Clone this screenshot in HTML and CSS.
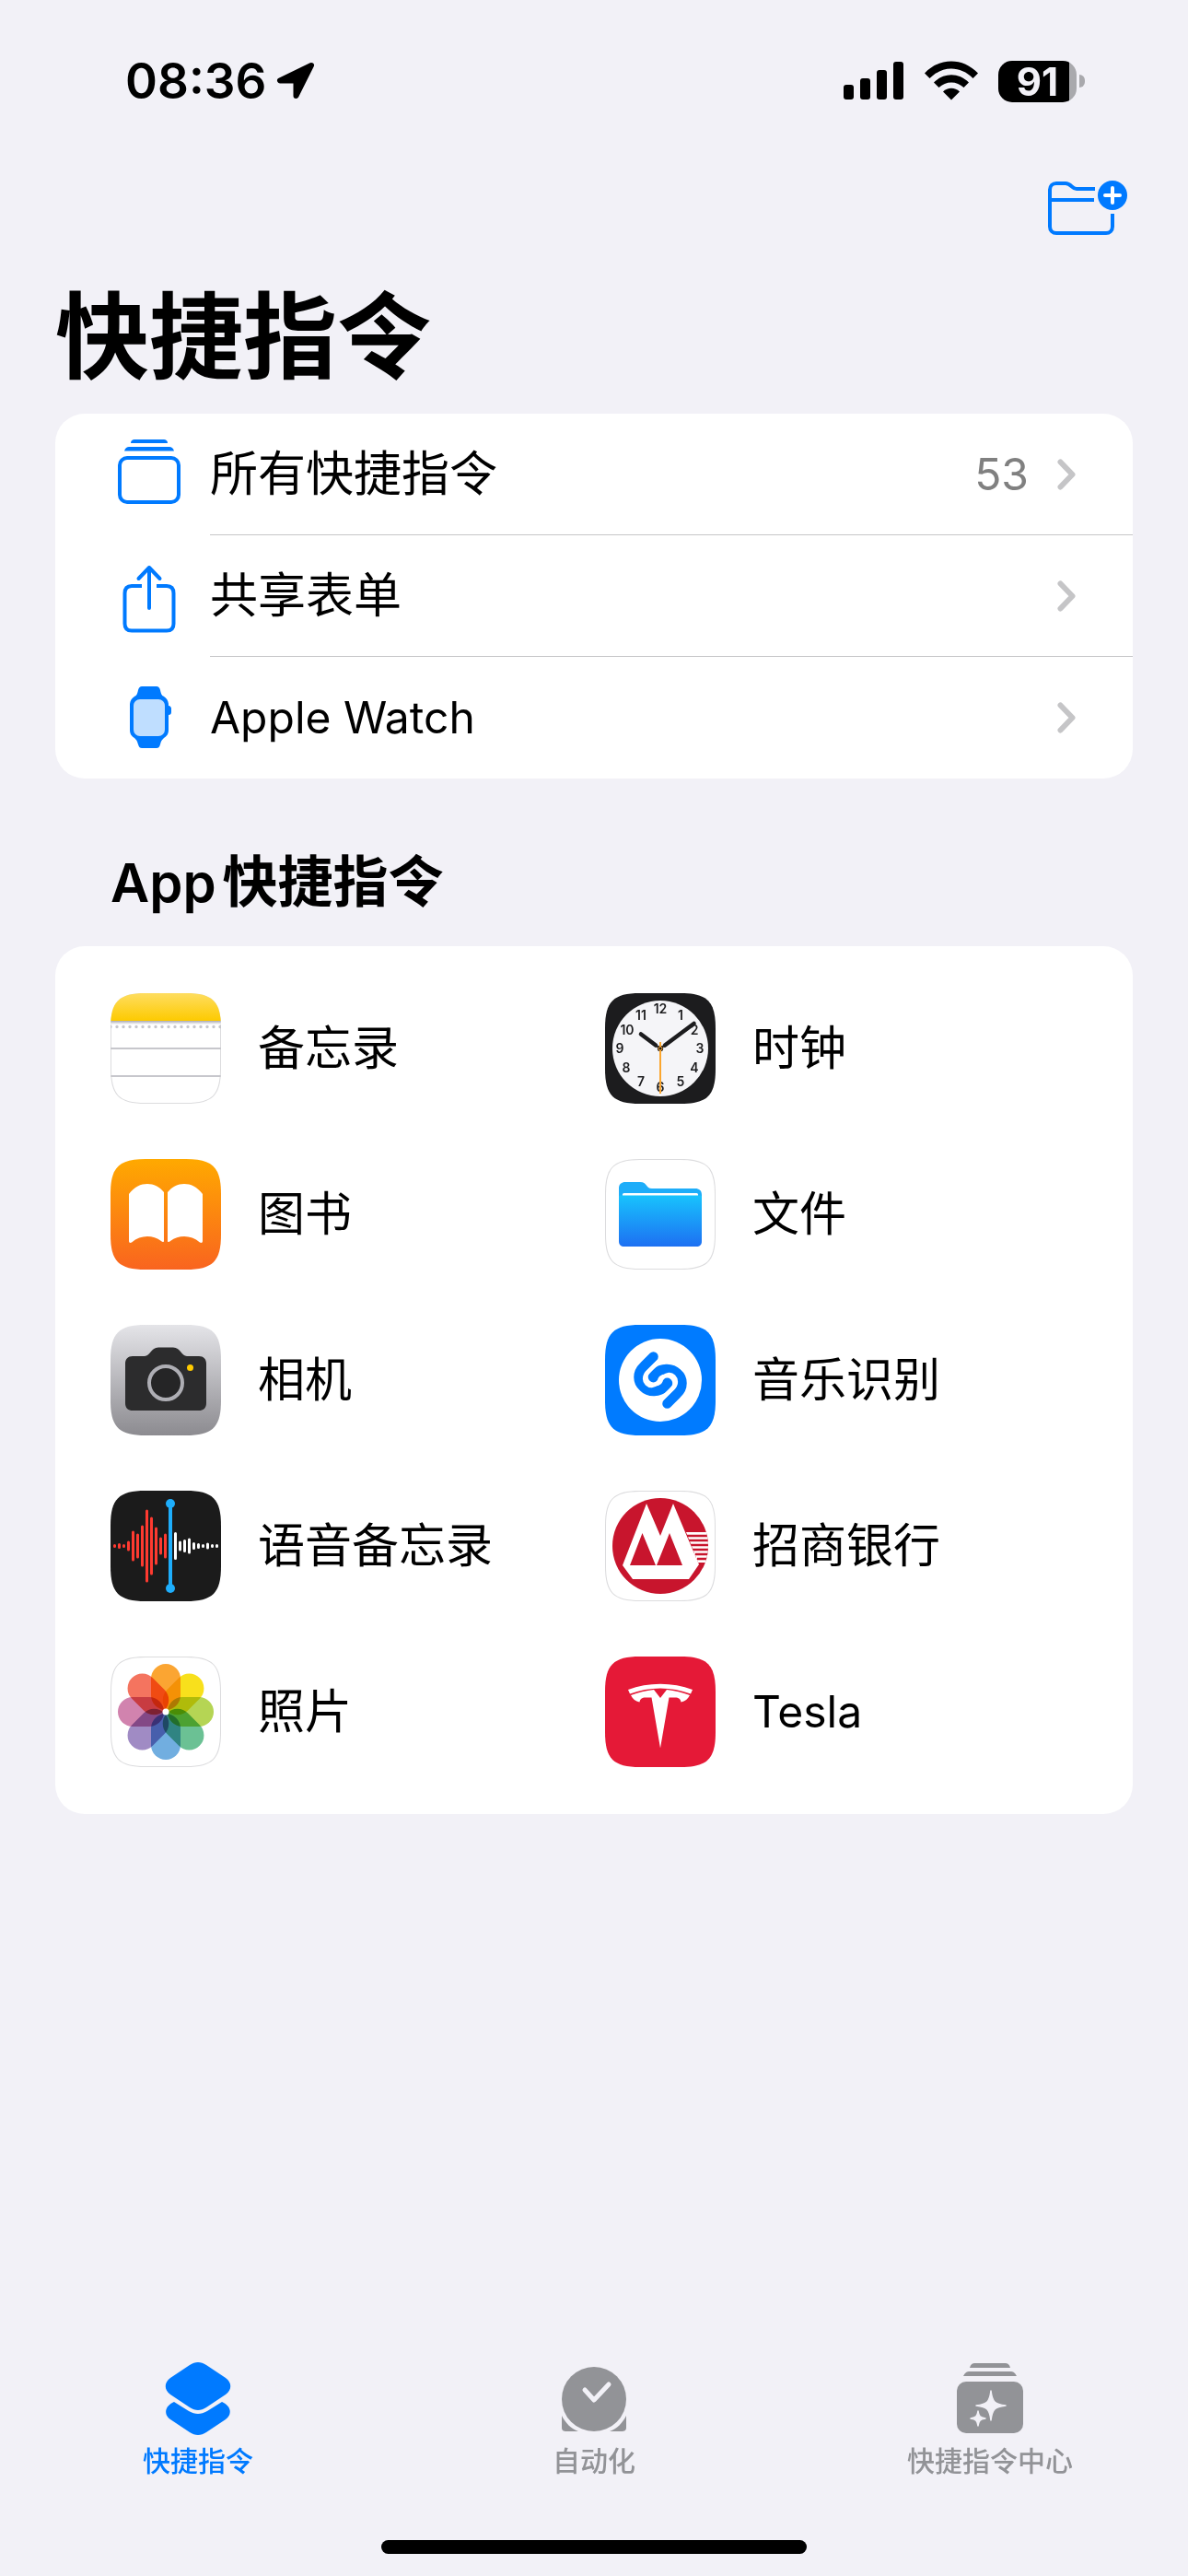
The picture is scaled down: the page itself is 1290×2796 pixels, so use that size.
FILE: index.html
```html
<!DOCTYPE html>
<html lang="zh-CN">
<head>
  <meta charset="UTF-8">
  <meta name="viewport" content="width=device-width, initial-scale=1.0">
  <title>快捷指令</title>
  <link rel="stylesheet" href="styles.css">
</head>
<body>
  <!-- Status bar -->
  <div class="status-bar">
    <div class="status-left">
      <span class="time">08:36</span>
      <svg width="44" height="44" viewBox="0 0 44 44"><path d="M39 5L5 21.500H22.500V38Z" fill="#000" stroke="#000" stroke-width="6" stroke-linejoin="round"/></svg>
    </div>
    <div class="status-right">
      <svg width="66" height="44" viewBox="0 0 66 44">
        <rect x="0" y="26" width="11" height="16" rx="3"/>
        <rect x="18" y="19" width="11" height="23" rx="3"/>
        <rect x="36" y="10" width="11" height="32" rx="3"/>
        <rect x="54" y="1" width="11" height="41" rx="3"/>
      </svg>
      <svg width="58" height="44" viewBox="0 0 58 44">
        <path d="M0 13.500C16-4 42-4 58 13.500L52.500 19C39 5 19 5 5.500 19Z"/>
        <path d="M10 23.500C21 12.500 37 12.500 48 23.500L42.500 29C35 21.500 23 21.500 15.500 29Z"/>
        <path d="M20 33.500C25 28.500 33 28.500 38 33.500L29 42.500Z"/>
      </svg>
      <div class="battery-group">
        <span class="battery">91</span>
        <span class="battery-cap"></span>
      </div>
    </div>
  </div>

  <header class="header">
    <div class="toolbar">
      <button class="icon-button" aria-label="新建文件夹">
        <svg width="90" height="64" viewBox="0 0 90 64" fill="none" stroke="#007aff" stroke-width="4">
          <path d="M53 11H33C28 11 27 5 21 5H11C7 5 4 8 4 12V52C4 56 7 59 11 59H65C69 59 72 56 72 52V38"/>
          <path d="M4 23H52"/>
          <circle cx="72" cy="18" r="16" fill="#007aff" stroke="none"/>
          <path d="M72 10V26M64 18H80" stroke="#fff" stroke-linecap="round"/>
        </svg>
      </button>
    </div>
    <h1>快捷指令</h1>
  </header>

  <main class="content">
    <!-- Shortcut collections -->
    <nav class="card list">
      <a class="row" href="#all">
        <span class="row-icon">
          <svg width="72" height="76" viewBox="0 0 72 76" fill="none" stroke="#007aff" stroke-width="4">
            <path d="M16 4C16 1 18 0 20 0H52C54 0 56 1 56 4ZM9 12.500C10 9 12 8 14 8H58C60 8 62 9 63 12.500Z" fill="#007aff" stroke="none"/>
            <rect x="4" y="20" width="64" height="48" rx="8"/>
          </svg>
        </span>
        <span class="row-body">
          <span class="row-label">所有快捷指令</span>
          <span class="row-count">53</span>
          <svg class="chevron" width="20" height="34" viewBox="0 0 20 34"><path d="M3.500 3.500L16.500 17L3.500 30.500"/></svg>
        </span>
      </a>
      <a class="row" href="#share">
        <span class="row-icon">
          <svg width="72" height="80" viewBox="0 -6 72 80" fill="none" stroke="#007aff" stroke-width="4" stroke-linecap="round" stroke-linejoin="round">
            <path d="M28 23H17C12 23 9.500 26 9.500 31V64C9.500 69 12 71.500 17 71.500H55C60 71.500 62.500 69 62.500 64V31C62.500 26 60 23 55 23H44" stroke-linecap="butt"/>
            <path d="M36 47V3M24.500 15L36 3L47.500 15"/>
          </svg>
        </span>
        <span class="row-body">
          <span class="row-label">共享表单</span>
          <svg class="chevron" width="20" height="34" viewBox="0 0 20 34"><path d="M3.500 3.500L16.500 17L3.500 30.500"/></svg>
        </span>
      </a>
      <a class="row" href="#watch">
        <span class="row-icon">
          <svg width="72" height="68" viewBox="0 0 72 68">
            <path d="M28 0H44C46 0 47 1 48 4C49 9 50 10 52 11C55 13 57 16 57 20V21C59 21 60 23 60 24V28C60 30 59 31 57 31V47C57 52 55 54 52 56C50 58 49 59 48 63C47 66 46 67 44 67H28C26 67 25 66 24 63C23 59 22 58 20 56C17 54 15 52 15 47V20C15 16 17 13 20 11C22 10 23 9 24 4C25 1 26 0 28 0Z" fill="#007aff"/>
            <rect x="19" y="14" width="34" height="40" rx="7" fill="#bfdeff"/>
          </svg>
        </span>
        <span class="row-body">
          <span class="row-label latin">Apple Watch</span>
          <svg class="chevron" width="20" height="34" viewBox="0 0 20 34"><path d="M3.500 3.500L16.500 17L3.500 30.500"/></svg>
        </span>
      </a>
    </nav>

    <h2><span class="heading-latin">App</span>快捷指令</h2>

    <!-- App shortcuts -->
    <section class="card app-grid">
      <a class="app" href="#notes">
        <svg class="app-icon" viewBox="0 0 120 120">
          <defs>
            <clipPath id="tile"><path d="M0 38C0 9 9 0 38 0H82C111 0 120 9 120 38V82C120 111 111 120 82 120H38C9 120 0 111 0 82Z"/></clipPath>
            <linearGradient id="notesTop" x2="0" y2="1"><stop stop-color="#fedd60"/><stop offset="1" stop-color="#fdca00"/></linearGradient>
            <linearGradient id="notesShade" x2="0" y2="1"><stop stop-color="#aaaab4"/><stop offset="1" stop-color="#fff"/></linearGradient>
          </defs>
          <g clip-path="url(#tile)">
            <rect width="120" height="120" fill="#fff"/>
            <path class="tile-edge" d="M0 38C0 9 9 0 38 0H82C111 0 120 9 120 38V82C120 111 111 120 82 120H38C9 120 0 111 0 82Z"/>
            <rect width="120" height="30" fill="url(#notesTop)"/>
            <rect y="30" width="120" height="4" fill="url(#notesShade)"/>
            <path d="M0 36.500H120" stroke="#c7c7cc" stroke-width="3.400" stroke-linecap="round" stroke-dasharray="0 7"/>
            <path d="M0 60H120M0 90H120" stroke="#c7c7cc" stroke-width="2"/>
          </g>
        </svg>
        <span>备忘录</span>
      </a>
      <a class="app" href="#clock">
        <svg class="app-icon" viewBox="0 0 120 120">
          <g clip-path="url(#tile)">
            <rect width="120" height="120" fill="#1c1c1e"/>
            <circle cx="60" cy="60" r="52" fill="#f5f5f8"/>
            <g class="clock-numbers">
              <text x="60" y="22">12</text><text x="82" y="29">1</text><text x="97" y="45">2</text><text x="103" y="65">3</text>
              <text x="97" y="86">4</text><text x="82" y="101">5</text><text x="60" y="107">6</text><text x="39" y="101">7</text>
              <text x="23" y="86">8</text><text x="16" y="65">9</text><text x="24" y="45">10</text><text x="39" y="29">11</text>
            </g>
            <path d="M60 60L55 56.500M60 60L65 56.500" stroke="#1c1c1e" stroke-width="2"/>
            <path d="M55 56.500L39 44.500M65 56.500L96.500 33" stroke="#1c1c1e" stroke-width="4.600" stroke-linecap="round"/>
            <circle cx="60" cy="60" r="3.200" fill="#1c1c1e"/>
            <path d="M60 53V109" stroke="#fba62f" stroke-width="2"/>
            <circle cx="60" cy="60" r="2" fill="#1c1c1e" stroke="#fba62f"/>
          </g>
        </svg>
        <span>时钟</span>
      </a>
      <a class="app" href="#books">
        <svg class="app-icon" viewBox="0 0 120 120">
          <defs><linearGradient id="booksBg" x2="0" y2="1"><stop stop-color="#ffa900"/><stop offset="1" stop-color="#f9641f"/></linearGradient></defs>
          <g clip-path="url(#tile)">
            <rect width="120" height="120" fill="url(#booksBg)"/>
            <path d="M20 38C26 30 33 27 40 27C47 27 53 30 58 36V89C58 90.500 56 90 55 89C46 82.500 33 82 23 90.500C21.500 91.500 20 91 20 89Z" fill="#fff"/>
            <path d="M100 38C94 30 87 27 80 27C73 27 67 30 62 36V89C62 90.500 64 90 65 89C74 82.500 87 82 97 90.500C98.500 91.500 100 91 100 89Z" fill="#fff"/>
          </g>
        </svg>
        <span>图书</span>
      </a>
      <a class="app" href="#files">
        <svg class="app-icon" viewBox="0 0 120 120">
          <defs><linearGradient id="filesFront" x2="0" y2="1"><stop stop-color="#18c3fd"/><stop offset="1" stop-color="#1d70f2"/></linearGradient></defs>
          <g clip-path="url(#tile)">
            <rect width="120" height="120" fill="#fff"/>
            <path class="tile-edge" d="M0 38C0 9 9 0 38 0H82C111 0 120 9 120 38V82C120 111 111 120 82 120H38C9 120 0 111 0 82Z"/>
            <path d="M15 50V32C15 27 18 25 22 25H38C46 25 44 32 51 32H98C102 32 105 34 105 39V50Z" fill="#1eadf9"/>
            <rect x="19" y="37" width="82" height="8" rx="1.500" fill="#fff"/>
            <path d="M15 41C15 40 16 39.500 17 39.500H103C104 39.500 105 40 105 41V89C105 93 103 95 99 95H21C17 95 15 93 15 89Z" fill="url(#filesFront)"/>
          </g>
        </svg>
        <span>文件</span>
      </a>
      <a class="app" href="#camera">
        <svg class="app-icon" viewBox="0 0 120 120">
          <defs><linearGradient id="cameraBg" x2="0" y2="1"><stop stop-color="#e4e4e8"/><stop offset="1" stop-color="#8c8b90"/></linearGradient></defs>
          <g clip-path="url(#tile)">
            <rect width="120" height="120" fill="url(#cameraBg)"/>
            <path d="M24 34H37C43 34 44 24.500 52 24.500H68C76 24.500 77 34 83 34H96C101 34 104 37 104 42V85C104 90 101 93 96 93H24C19 93 16 90 16 85V42C16 37 19 34 24 34Z" fill="#2c2c2d"/>
            <circle cx="60" cy="63" r="18" fill="#252526" stroke="#aeaeb4" stroke-width="4"/>
            <circle cx="86.500" cy="46.500" r="3.500" fill="#ffcb00"/>
          </g>
        </svg>
        <span>相机</span>
      </a>
      <a class="app" href="#music">
        <svg class="app-icon" viewBox="0 0 120 120">
          <g clip-path="url(#tile)">
            <rect width="120" height="120" fill="#007bff"/>
            <circle cx="60" cy="60" r="45" fill="#fff"/>
            <g fill="none" stroke="#007bff" stroke-width="10.500" stroke-linecap="round">
              <path d="M52.500 34.500L42 45C34.500 52 35 62 41.500 67.500C48 74 59 73 65 67.500L68 63.500"/>
              <path d="M67.500 85.500L78 75C85.500 68 85 58 78.500 52.500C72 46 61 47 55 52.500L52 56.500"/>
            </g>
            <path d="M58 40L46 52C42 56 42.500 61 45.500 64C48.500 67 53 66.500 56 63.500L64 56.500C67 53.500 71.500 53 74.500 56C77.500 59 78 64 74 68L62 80" fill="none" stroke="#fff" stroke-width="4.500"/>
            <circle cx="52.500" cy="57.500" r="5" fill="#007bff"/>
            <circle cx="67.500" cy="62.500" r="5" fill="#007bff"/>
          </g>
        </svg>
        <span>音乐识别</span>
      </a>
      <a class="app" href="#voice">
        <svg class="app-icon" viewBox="0 0 120 120">
          <g clip-path="url(#tile)" stroke-linecap="round">
            <rect width="120" height="120" fill="#1b1b1b"/>
            <path d="M4.500 59.500V60.500M9.500 58.500V61.500M14.500 59.500V60.500M19.500 56V64M24.500 45V75M29.500 48V72M34.500 39V81M39.500 22V98M44.500 30V90M49.500 41V79M54.500 52V68M59.500 48V72" stroke="#ff3a30" stroke-width="3"/>
            <path d="M70.500 46.500V73.500M75.500 56V64M80.500 54.500V65.500M85.500 53V67M90.500 57.500V62.500M95.500 58.500V61.500M100.500 59.500V60.500M105.500 58V62M110.500 59.500V60.500M115.500 59.500V60.500" stroke="#fff" stroke-width="3"/>
            <path d="M65 14V106" stroke="#1eaefc" stroke-width="4"/>
            <circle cx="65" cy="14" r="5" fill="#1eaefc"/>
            <circle cx="65" cy="106" r="5" fill="#1eaefc"/>
          </g>
        </svg>
        <span>语音备忘录</span>
      </a>
      <a class="app" href="#bank">
        <svg class="app-icon" viewBox="0 0 120 120">
          <defs><clipPath id="bankDisc"><circle cx="60" cy="60" r="52"/></clipPath></defs>
          <g clip-path="url(#tile)">
            <rect width="120" height="120" fill="#fff"/>
            <path class="tile-edge" d="M0 38C0 9 9 0 38 0H82C111 0 120 9 120 38V82C120 111 111 120 82 120H38C9 120 0 111 0 82Z"/>
            <g clip-path="url(#bankDisc)">
              <rect width="120" height="120" fill="#c8152d"/>
              <path d="M88 45H120V78H101Z" fill="#fff"/>
              <path d="M89 49H120M91 54H120M93 59H120M95 64H120M98 69H120M100 74H120" stroke="#c8152d" stroke-width="2.400"/>
              <path d="M45 14L60 49L74 14L87 45L102 80L91 96H30L19 81Z" fill="#fff"/>
              <path d="M40.500 46L27 81H55ZM70 46L56 81H84Z" fill="#c8152d"/>
            </g>
          </g>
        </svg>
        <span>招商银行</span>
      </a>
      <a class="app" href="#photos">
        <svg class="app-icon" viewBox="0 0 120 120">
          <g clip-path="url(#tile)">
            <rect width="120" height="120" fill="#fff"/>
            <path class="tile-edge" d="M0 38C0 9 9 0 38 0H82C111 0 120 9 120 38V82C120 111 111 120 82 120H38C9 120 0 111 0 82Z"/>
            <g class="petals">
              <rect x="44" y="8" width="32" height="50" rx="16" fill="#fba532"/>
              <rect x="44" y="8" width="32" height="50" rx="16" fill="#f8e01c" transform="rotate(45 60 60)"/>
              <rect x="44" y="8" width="32" height="50" rx="16" fill="#b5d554" transform="rotate(90 60 60)"/>
              <rect x="44" y="8" width="32" height="50" rx="16" fill="#6bc194" transform="rotate(135 60 60)"/>
              <rect x="44" y="8" width="32" height="50" rx="16" fill="#71aee0" transform="rotate(180 60 60)"/>
              <rect x="44" y="8" width="32" height="50" rx="16" fill="#a08bc4" transform="rotate(225 60 60)"/>
              <rect x="44" y="8" width="32" height="50" rx="16" fill="#d183ae" transform="rotate(270 60 60)"/>
              <rect x="44" y="8" width="32" height="50" rx="16" fill="#f4745f" transform="rotate(315 60 60)"/>
            </g>
            <circle cx="60" cy="60" r="3.500" fill="#fff"/>
          </g>
        </svg>
        <span>照片</span>
      </a>
      <a class="app" href="#tesla">
        <svg class="app-icon" viewBox="0 0 120 120">
          <g clip-path="url(#tile)">
            <rect width="120" height="120" fill="#e51937"/>
            <path d="M25 36C47 27.500 73 27.500 95 36L93 40.500C72 32.500 48 32.500 27 40.500Z" fill="#fff"/>
            <path d="M28 42C36 39 44 37 53 36L60 45L67 36C76 37 84 39 92 42C90 46 87 48.500 82.500 49.500C82 46 80 44.500 76 44.500H69.500L60 99.500L50.500 44.500H44C40 44.500 38 46 37.500 49.500C33 48.500 30 46 28 42Z" fill="#fff"/>
          </g>
        </svg>
        <span class="latin">Tesla</span>
      </a>
    </section>
  </main>

  <!-- Tab bar -->
  <nav class="tab-bar">
    <a class="tab active" href="#shortcuts">
      <svg width="80" height="80" viewBox="0 0 80 80" fill="currentColor">
        <path d="M31 3C37-1 43-1 49 3L70 17C77 22 77 30 70 35L49 49C43 53 37 53 31 49L10 35C3 30 3 22 10 17Z"/>
        <path d="M14 43L30 53C37 57 43 57 50 53L66 43C77 48 77 57 70 62L49 76C43 80 37 80 31 76L10 62C3 57 3 48 14 43Z"/>
      </svg>
      <span>快捷指令</span>
    </a>
    <a class="tab" href="#automation">
      <svg width="80" height="80" viewBox="0 0 80 80" fill="currentColor">
        <circle cx="40" cy="40" r="35"/>
        <path d="M5 58C9 66 15 72 23 75H10C7 75 5 74 5 71ZM75 58C71 66 65 72 57 75H70C73 75 75 74 75 71Z"/>
        <path d="M30 30L40 41L56 24" fill="none" stroke="#f2f1f7" stroke-width="5" stroke-linecap="round" stroke-linejoin="round"/>
      </svg>
      <span>自动化</span>
    </a>
    <a class="tab" href="#gallery">
      <svg width="80" height="80" viewBox="0 0 80 80" fill="currentColor">
        <path d="M18 6C19 2 21 1 24 1H56C59 1 61 2 62 6ZM11 15C13 11 15 10 18 10H62C65 10 67 11 69 15Z"/>
        <rect x="4" y="21" width="72" height="56" rx="10"/>
        <path d="M41 31C42.500 43 45 45.500 57 47C45 48.500 42.500 51 41 63C39.500 51 37 48.500 25 47C37 45.500 39.500 43 41 31ZM27 53C28 59 29 60 35 61C29 62 28 63 27 69C26 63 25 62 19 61C25 60 26 59 27 53Z" fill="#f2f1f7" stroke="#f2f1f7" stroke-width="1.500" stroke-linejoin="round"/>
      </svg>
      <span>快捷指令中心</span>
    </a>
  </nav>
  <div class="home-indicator"></div>
</body>
</html>
```
FILE: styles.css
```css
* {
  box-sizing: border-box;
}
body {
  margin: 0;
  min-height: 100vh;
  display: flex;
  flex-direction: column;
  background-color: #f2f1f7;
  color: #000;
  font-family: Inter, "Noto Sans CJK SC", sans-serif;
  font-size: 51px;
  line-height: 64px;
}
a {
  color: inherit;
  text-decoration: none;
}
svg {
  display: block;
  flex-shrink: 0;
}

/* Status bar */
.status-bar {
  display: flex;
  justify-content: space-between;
  align-items: center;
  height: 128px;
  padding: 48px 112px 0 136px;
}
.status-left,
.status-right {
  display: flex;
  align-items: center;
}
.status-left {
  gap: 10px;
}
.status-right {
  gap: 22px;
}
.time {
  font-size: 53px;
  font-weight: 600;
}
.battery-group {
  display: flex;
  align-items: center;
  gap: 3px;
}
.battery {
  width: 85px;
  height: 45px;
  line-height: 45px;
  border-radius: 15px;
  background: linear-gradient(90deg, #000 77px, #a9a9ad 77px);
  color: #f2f1f7;
  font-size: 42px;
  font-weight: 700;
  text-align: center;
}
.battery-cap {
  width: 6px;
  height: 14px;
  border-radius: 0 6px 6px 0;
  background: #a9a9ad;
}

/* Header */
.header {
  padding: 66px 60px 19px;
}
.toolbar {
  display: flex;
  justify-content: flex-end;
  padding-right: 4px;
}
.icon-button {
  padding: 0;
  border: none;
  background: none;
  cursor: pointer;
}
h1 {
  margin: 44px 0 0;
  font-size: 102px;
  line-height: 128px;
  font-weight: 600;
}

/* Cards */
.content {
  flex: 1;
  padding: 0 60px;
}
.card {
  background: #fff;
  border-radius: 32px;
  overflow: hidden;
}
.row {
  display: flex;
  align-items: center;
  height: 132px;
  padding-left: 66px;
}
.row-icon {
  width: 102px;
}
.row-body {
  flex: 1;
  display: flex;
  align-items: center;
  height: 132px;
  padding-right: 62px;
  border-bottom: 1px solid #c6c6c8;
}
.row:last-child .row-body {
  border-bottom: none;
}
.row-label {
  flex: 1;
  font-size: 52px;
}
.row-count {
  margin-right: 31px;
  color: #808080;
  font-size: 48px;
}
.latin {
  font-size: 48px;
}
.chevron {
  fill: none;
  stroke: #c5c5c7;
  stroke-width: 6;
  stroke-linecap: round;
  stroke-linejoin: round;
}
h2 {
  margin: 72px 60px 29px;
  font-size: 60px;
  line-height: 80px;
  font-weight: 600;
}
.heading-latin {
  margin-right: 7px;
  font-size: 58px;
}

/* App grid */
.app-grid {
  display: grid;
  grid-template-columns: 1fr 1fr;
  gap: 60px 24px;
  padding: 51px 60px;
}
.app {
  display: flex;
  align-items: center;
  gap: 40px;
}
.app-icon {
  width: 120px;
  height: 120px;
}
.tile-edge {
  fill: none;
  stroke: #dcdcde;
  stroke-width: 2;
}
.clock-numbers {
  font-size: 14px;
  font-weight: 600;
  text-anchor: middle;
  fill: #1c1c1e;
}
.petals {
  isolation: isolate;
}
.petals rect {
  mix-blend-mode: multiply;
}

/* Tab bar */
.tab-bar {
  display: flex;
}
.tab {
  flex: 1;
  display: flex;
  flex-direction: column;
  align-items: center;
  gap: 7px;
  color: #929397;
  font-size: 30px;
  line-height: 40px;
  font-weight: 500;
}
.tab.active {
  color: #007aff;
}
.home-indicator {
  width: 462px;
  height: 15px;
  margin: 66px auto 24px;
  border-radius: 8px;
  background: #000;
}
```
